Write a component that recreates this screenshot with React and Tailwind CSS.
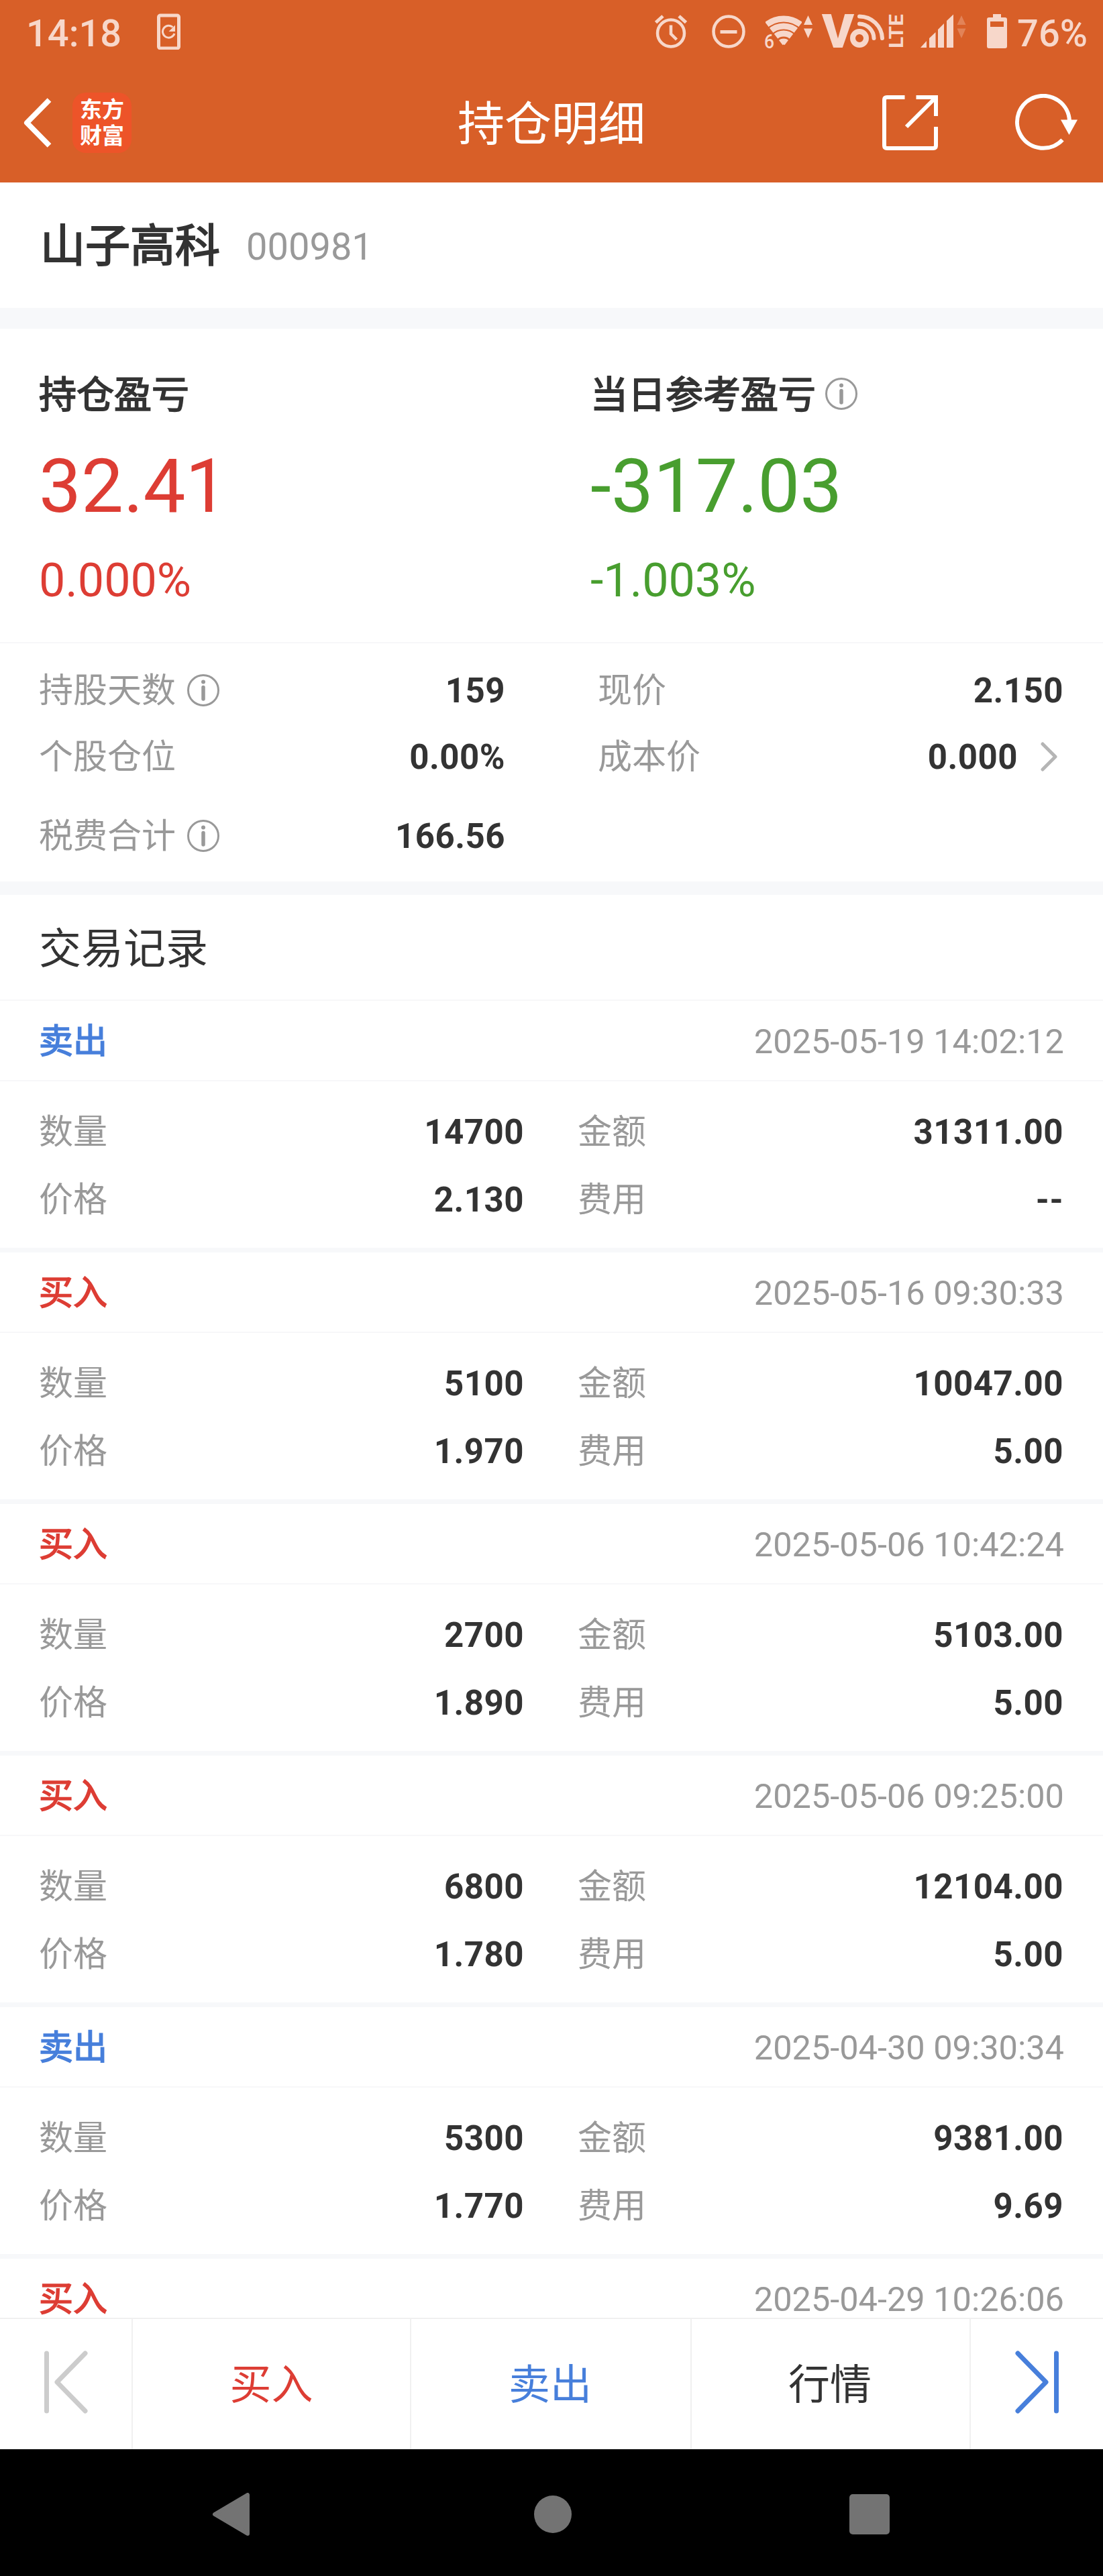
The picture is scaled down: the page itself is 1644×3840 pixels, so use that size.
import React from "react";

const RECORDS = [
  { type: "sell", time: "2025-05-19 14:02:12", count: "14700", amount: "31311.00", price: "2.130", fee: "--" },
  { type: "buy", time: "2025-05-16 09:30:33", count: "5100", amount: "10047.00", price: "1.970", fee: "5.00" },
  { type: "buy", time: "2025-05-06 10:42:24", count: "2700", amount: "5103.00", price: "1.890", fee: "5.00" },
  { type: "buy", time: "2025-05-06 09:25:00", count: "6800", amount: "12104.00", price: "1.780", fee: "5.00" },
  { type: "sell", time: "2025-04-30 09:30:34", count: "5300", amount: "9381.00", price: "1.770", fee: "9.69" },
  { type: "buy", time: "2025-04-29 10:26:06" },
];

function StatusBar() {
  return (
    <div className="flex h-[94px] items-center pl-[39px] pr-[23px] text-[56px] leading-none font-medium text-[#f7d7ca]">
      <span className="mt-[5px]">14:18</span>

      {/* 旋转锁定 */}
      <svg className="ml-[52px] h-[54px] w-[36px] shrink-0" viewBox="0 0 36 54" fill="none" stroke="currentColor">
        <rect x="3.5" y="3" width="30" height="49" rx="2.5" strokeWidth="5" />
        <path d="M24.5 20.5A9 9 0 1 0 27 30" strokeWidth="3" />
        <path d="M28 17.5V27H18.5z" fill="currentColor" stroke="none" />
      </svg>

      <div className="ml-auto flex items-center">
        {/* 闹钟 */}
        <svg className="h-[54px] w-[50px]" viewBox="0 0 50 54" fill="none" stroke="currentColor">
          <circle cx="25" cy="29.5" r="20" strokeWidth="4.5" />
          <path d="M25 17.5v13l8.5 8.5" strokeWidth="4.5" />
          <path d="M2.5 13.5L13 4M47.5 13.5L37 4" strokeWidth="5" />
        </svg>

        {/* 勿扰 */}
        <svg className="ml-[35px] h-[54px] w-[52px]" viewBox="0 0 52 54" fill="none" stroke="currentColor" strokeWidth="4.5">
          <circle cx="26" cy="27" r="22.5" />
          <path d="M13.5 27.5h25" strokeWidth="5" />
        </svg>

        {/* WiFi 6 */}
        <svg className="ml-[27px] h-[54px] w-[74px] overflow-visible" viewBox="0 0 74 54">
          <defs>
            <clipPath id="wifi">
              <path d="M2 14L29 49L56 14L56 0L2 0z" />
            </clipPath>
          </defs>
          <g clipPath="url(#wifi)" fill="none" stroke="currentColor" strokeWidth="9">
            <circle cx="29" cy="49" r="41" />
            <circle cx="29" cy="49" r="30" />
            <circle cx="29" cy="49" r="19" />
            <circle cx="29" cy="49" r="7" />
          </g>
          <text x="0" y="52" fontSize="29" fontWeight="500" fill="currentColor" textLength="15" lengthAdjust="spacingAndGlyphs">6</text>
          <path d="M65.5 3l6.5 14h-13zM65.5 37l6.5-14.5h-13z" fill="currentColor" />
        </svg>

        {/* VoLTE */}
        <svg className="ml-[12px] h-[54px] w-[124px] overflow-visible" viewBox="0 0 124 54">
          <text x="0" y="51" fontSize="70" fontWeight="900" fill="currentColor" textLength="48" lengthAdjust="spacingAndGlyphs">V</text>
          <circle cx="56" cy="37" r="10" fill="none" stroke="currentColor" strokeWidth="8" />
          <path
            d="M56 15.5A22 22 0 0 1 77.5 37M56 4.5A34 34 0 0 1 90 37"
            fill="none"
            stroke="currentColor"
            strokeWidth="6"
            strokeLinecap="round"
          />
          <text transform="translate(121 52) rotate(-90)" fontSize="30" fontWeight="700" fill="currentColor" textLength="51" lengthAdjust="spacingAndGlyphs">LTE</text>
        </svg>

        {/* 信号 */}
        <svg className="ml-[23px] h-[54px] w-[70px]" viewBox="0 0 70 54" fill="currentColor">
          <path d="M0 51L9 41V51zM13 37L22.5 28V51H13zM26 24L35 15V51H26zM39 11L49 1.5V51H39z" />
          <path d="M61 3l6.5 14h-13zM61 37l6.5-14.5h-13z" opacity="0.3" />
        </svg>

        {/* 电量 */}
        <svg className="ml-[28px] h-[54px] w-[32px]" viewBox="0 0 32 54" fill="currentColor">
          <path fillRule="evenodd" d="M10 1h12v5h6q3 0 3 3v40q0 3-3 3H4q-3 0-3-3V9q0-3 3-3h6zM6 12v8h20v-8z" />
        </svg>
        <span className="ml-[14px] mt-[5px]">76%</span>
      </div>
    </div>
  );
}

function TitleBar() {
  return (
    <div className="grid h-[178px] grid-cols-3 items-center pl-[34px] pr-[36px] text-white">
      <div className="flex items-center">
        <svg className="h-[76px] w-[46px]" viewBox="0 0 46 76" fill="none" stroke="currentColor" strokeWidth="8">
          <path d="M39.5 4L6 38l33.5 34" strokeLinejoin="round" />
        </svg>
        <div className="ml-[28px] flex h-[90px] w-[88px] flex-col items-center justify-center rounded-[20px] bg-[#ed5429] text-[33px] leading-[39px] font-bold">
          <span>东方</span>
          <span>财富</span>
        </div>
      </div>

      <h1 className="mt-[5px] pl-[2px] text-center text-[70px] leading-[70px]">持仓明细</h1>

      <div className="flex items-center justify-end">
        <svg className="h-[84px] w-[86px]" viewBox="0 0 86 84" fill="none" stroke="currentColor" strokeWidth="6">
          <path d="M34.5 4H8q-4 0-4 4V76q0 4 4 4H77q4 0 4-4V48" />
          <path d="M51.5 4H81V32M80 5L37 48" />
        </svg>
        <svg className="ml-[112px] h-[86px] w-[96px]" viewBox="0 0 96 86" fill="none" stroke="currentColor" strokeWidth="6">
          <path d="M82 40A39 39 0 1 0 71.5 68.5" />
          <path d="M69 38.5H94L81.5 61z" fill="currentColor" stroke="none" />
        </svg>
      </div>
    </div>
  );
}

function InfoIcon() {
  return (
    <svg className="h-[50px] w-[50px] shrink-0 text-[#999]" viewBox="0 0 50 50" fill="none" stroke="currentColor">
      <circle cx="25" cy="25" r="22.5" strokeWidth="3" />
      <path d="M25 20.5V38" strokeWidth="5.5" strokeLinecap="round" />
      <circle cx="25" cy="12.5" r="3" fill="currentColor" stroke="none" />
    </svg>
  );
}

function Profit({ title, value, percent, color, info }) {
  return (
    <div className="w-[822px] pl-[58px]">
      <div className="flex h-[60px] items-center text-[56px] leading-[60px] text-[#333]">
        <span className="mt-[3px] [-webkit-text-stroke:1.75px_#333]">{title}</span>
        {info && <span className="ml-[13px]"><InfoIcon /></span>}
      </div>
      <div className={`mt-[43px] text-[112px] leading-[130px] ${color}`}>{value}</div>
      <div className={`mt-[35px] text-[70px] leading-[80px] ${color}`}>{percent}</div>
    </div>
  );
}

function Field({ label, value, info, arrow }) {
  return (
    <div className="flex h-[60px] items-center text-[51px] leading-[60px]">
      <span className="mt-[2px] text-[#999]">{label}</span>
      {info && <span className="ml-[16px]"><InfoIcon /></span>}
      <span className="mt-[2px] ml-auto font-bold tracking-[0.5px] text-[#333]">{value}</span>
      {arrow && (
        <svg className="ml-[33px] mr-[7px] h-[44px] w-[28px]" viewBox="0 0 28 44" fill="none" stroke="#b5b5b5" strokeWidth="5">
          <path d="M4 3l19 19L4 41" strokeLinecap="round" strokeLinejoin="round" />
        </svg>
      )}
    </div>
  );
}

function Record({ record }) {
  const isBuy = record.type === "buy";
  return (
    <div className="h-[375px] shrink-0">
      <div className="flex h-[120px] items-center justify-between border-b-2 border-[#f7f7f9] pl-[58px] pr-[58px] text-[51px] leading-[60px]">
        <span
          className={`mt-[3px] ${
            isBuy ? "text-[#dd3d34] [-webkit-text-stroke:1.6px_#dd3d34]" : "text-[#477fdb] [-webkit-text-stroke:1.6px_#477fdb]"
          }`}
        >
          {isBuy ? "买入" : "卖出"}
        </span>
        <span className="mt-[3px] text-[50.5px] text-[#999]">{record.time}</span>
      </div>
      {record.count && (
        <div className="flex h-[255px] border-b-[7px] border-[#f7f8fa] pl-[58px] pr-[59px] pt-[45px]">
          <div className="flex w-[723px] flex-col gap-[41px]">
            <Field label="数量" value={record.count} />
            <Field label="价格" value={record.price} />
          </div>
          <div className="ml-[80px] flex flex-1 flex-col gap-[41px]">
            <Field label="金额" value={record.amount} />
            <Field label="费用" value={record.fee} />
          </div>
        </div>
      )}
    </div>
  );
}

function BottomBar() {
  return (
    <div className="flex h-[196px] border-t-2 border-[#f0f0f0] bg-white text-[62px] leading-[70px]">
      <div className="flex w-[198px] items-center border-r-2 border-[#f0f0f0] pb-[6px] pl-[64px]">
        <svg className="h-[94px] w-[70px]" viewBox="0 0 70 94" fill="none" stroke="#ccc" strokeWidth="7" strokeLinecap="round" strokeLinejoin="round">
          <path d="M5.5 4V90M63 4L21 47L63 90" />
        </svg>
      </div>
      <div className="flex w-[415px] items-center justify-center border-r-2 border-[#f0f0f0] pt-[3px] text-[#dd3d34]">买入</div>
      <div className="flex w-[418px] items-center justify-center border-r-2 border-[#f0f0f0] pt-[3px] pr-[2px] text-[#477fdb]">卖出</div>
      <div className="flex w-[416px] items-center justify-center border-r-2 border-[#f0f0f0] pt-[3px] pr-[2px] text-[#333]">行情</div>
      <div className="flex flex-1 items-center justify-end pr-[64px] pb-[6px]">
        <svg className="h-[94px] w-[70px]" viewBox="0 0 70 94" fill="none" stroke="#477fdb" strokeWidth="7" strokeLinecap="round" strokeLinejoin="round">
          <path d="M64.5 4V90M7 4L49 47L7 90" />
        </svg>
      </div>
    </div>
  );
}

function SystemNav() {
  return (
    <div className="flex h-[189px] items-center bg-black pl-[316px] pt-[5px] text-[#737373]">
      <svg className="h-[64px] w-[56px]" viewBox="0 0 56 64" fill="currentColor" stroke="currentColor" strokeWidth="6" strokeLinejoin="round">
        <path d="M4 32L53 3V61z" />
      </svg>
      <div className="ml-[424px] h-[56px] w-[56px] rounded-full bg-[#737373]" />
      <div className="ml-[414px] h-[60px] w-[60px] rounded-[5px] bg-[#737373]" />
    </div>
  );
}

function App() {
  return (
    <div className="flex h-[3840px] w-[1644px] flex-col overflow-hidden bg-white font-['Roboto','Noto_Sans_CJK_SC',sans-serif]">
      <header className="shrink-0 bg-[#d85f28]">
        <StatusBar />
        <TitleBar />
      </header>

      <main className="min-h-0 flex-1 overflow-hidden">
        {/* 股票名称 */}
        <div className="flex h-[218px] items-center border-b-[31px] border-[#f7f8fa] pl-[60px]">
          <span className="mt-[2px] text-[67px] leading-[80px] text-[#333] [-webkit-text-stroke:2px_#333]">山子高科</span>
          <span className="ml-[39px] mt-[5px] text-[56px] leading-[70px] text-[#999]">000981</span>
        </div>

        {/* 盈亏 */}
        <div className="flex h-[469px] border-b-2 border-[#f7f7f9] pt-[67px]">
          <Profit title="持仓盈亏" value="32.41" percent="0.000%" color="text-[#dd3d34]" />
          <Profit title="当日参考盈亏" value="-317.03" percent="-1.003%" color="text-[#489e2f]" info />
        </div>

        {/* 持仓信息 */}
        <div className="flex h-[375px] border-b-[20px] border-[#f7f8fa] pl-[58px] pr-[59px] pt-[40px]">
          <div className="flex w-[695px] flex-col">
            <Field label="持股天数" value="159" info />
            <div className="h-[39px]" />
            <Field label="个股仓位" value="0.00%" />
            <div className="h-[58px]" />
            <Field label="税费合计" value="166.56" info />
          </div>
          <div className="ml-[138px] flex flex-1 flex-col gap-[39px]">
            <Field label="现价" value="2.150" />
            <Field label="成本价" value="0.000" arrow />
          </div>
        </div>

        {/* 交易记录 */}
        <h2 className="flex h-[158px] items-center border-b-2 border-[#f7f7f9] pl-[58px] pt-[5px] text-[63px] leading-[70px] text-[#333]">交易记录</h2>
        {RECORDS.map((record) => (
          <Record key={record.time} record={record} />
        ))}
      </main>

      <footer className="shrink-0">
        <BottomBar />
        <SystemNav />
      </footer>
    </div>
  );
}

export default App;
